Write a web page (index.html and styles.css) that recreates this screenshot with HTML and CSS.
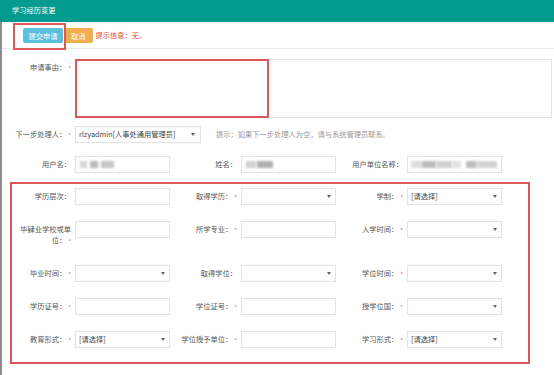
FILE: index.html
```html
<!DOCTYPE html>
<html lang="zh-CN">
<head>
<meta charset="utf-8">
<title>学习经历变更</title>
<link rel="stylesheet" href="styles.css">
</head>
<body>
<header class="titlebar">学习经历变更</header>
<main class="content">
  <div class="toolbar">
    <button class="btn btn-submit" type="button">提交申请</button>
    <button class="btn btn-cancel" type="button">取消</button>
    <span class="msg">提示信息：无。</span>
    <span class="mark mark-submit"></span>
  </div>

  <form class="form">
    <div class="line line-reason">
      <label class="lbl">申请事由：<span class="req">*</span></label>
      <div class="area-wrap">
        <textarea class="area"></textarea>
        <span class="mark mark-reason"></span>
      </div>
    </div>

    <div class="line line-next">
      <label class="lbl">下一步处理人：<span class="req">*</span></label>
      <div class="sel sel-wide"><select><option>rlzyadmin[人事处通用管理员]</option></select></div>
      <span class="hint">提示：如果下一步处理人为空，请与系统管理员联系。</span>
    </div>

    <div class="grid grid-user">
      <label class="lbl">用户名：</label>
      <div class="inp val"><span class="blur b1"></span><span class="blur b2"></span><span class="blur b3"></span></div>
      <label class="lbl">姓名：</label>
      <div class="inp val"><span class="blur b4"></span><span class="blur b5"></span></div>
      <label class="lbl">用户单位名称：</label>
      <div class="inp val"><span class="blur b6"></span><span class="blur b7"></span><span class="blur b8"></span><span class="blur b9"></span><span class="gap"></span><span class="blur b10"></span><span class="blur b11"></span></div>
    </div>

    <div class="grid grid-edu">
      <label class="lbl first">学历层次：</label>
      <input class="inp" type="text">
      <label class="lbl">取得学历：<span class="req">*</span></label>
      <div class="sel"><select><option></option></select></div>
      <label class="lbl">学制：<span class="req">*</span></label>
      <div class="sel"><select><option>[请选择]</option></select></div>

      <label class="lbl first">毕肄业学校或单位：<span class="req">*</span></label>
      <input class="inp" type="text">
      <label class="lbl">所学专业：<span class="req">*</span></label>
      <input class="inp" type="text">
      <label class="lbl">入学时间：<span class="req">*</span></label>
      <div class="sel"><select><option></option></select></div>

      <label class="lbl first">毕业时间：<span class="req">*</span></label>
      <div class="sel"><select><option></option></select></div>
      <label class="lbl">取得学位：</label>
      <div class="sel"><select><option></option></select></div>
      <label class="lbl">学位时间：<span class="req">*</span></label>
      <div class="sel"><select><option></option></select></div>

      <label class="lbl first">学历证号：<span class="req">*</span></label>
      <input class="inp" type="text">
      <label class="lbl">学位证号：<span class="req">*</span></label>
      <input class="inp" type="text">
      <label class="lbl">授学位国：<span class="req">*</span></label>
      <div class="sel"><select><option></option></select></div>

      <label class="lbl first">教育形式：<span class="req">*</span></label>
      <div class="sel"><select><option>[请选择]</option></select></div>
      <label class="lbl">学位授予单位：<span class="req">*</span></label>
      <input class="inp" type="text">
      <label class="lbl">学习形式：<span class="req">*</span></label>
      <div class="sel"><select><option>[请选择]</option></select></div>

      <span class="mark mark-edu"></span>
    </div>
  </form>
</main>
</body>
</html>
```
FILE: styles.css
```css
* { box-sizing: border-box; }

html, body { margin: 0; padding: 0; background: #fff; }

body {
  font-family: "Noto Sans CJK SC", "Noto Sans", sans-serif;
  font-size: 7.25px;
  color: #555;
  width: 554px;
  height: 375px;
  overflow: hidden;
}

.titlebar {
  height: 22px;
  line-height: 21px;
  padding-left: 12px;
  background: #029b90;
  color: #fff;
}

.content {
  position: relative;
  border-left: 2px solid #8d8d8d;
  height: 353px;
}

.toolbar {
  position: relative;
  height: 27px;
  border-bottom: 1px solid #ebebeb;
  display: flex;
  align-items: flex-start;
  gap: 1px;
  padding: 6px 0 0 21px;
}

.btn {
  height: 15px;
  line-height: 15px;
  padding: 0 5.5px;
  border: none;
  border-radius: 2px;
  color: #fff;
  font: inherit;
  cursor: pointer;
}
.btn-submit { background: #5bc0de; }
.btn-cancel { background: #f0ad4e; padding: 0 7px; }

.msg {
  margin-left: 2px;
  line-height: 15px;
  color: #ea4a2e;
}

.mark {
  position: absolute;
  border: 2px solid #e0575a;
  pointer-events: none;
}
.mark-submit { left: 11px; top: 1px; width: 53px; height: 27px; }
.mark-reason { left: 0; top: 0; width: 194px; height: 59px; }
.mark-edu { left: 8px; top: -6px; width: 520px; height: 182px; }

.form { padding-top: 10px; }

.line { display: flex; align-items: flex-start; }

.lbl {
  text-align: right;
  line-height: 11px;
  padding: 3px 4px 2px 9px;
  color: #555;
}
.line .lbl { width: 73px; }
.grid .first { padding-left: 16px; }

.req {
  color: #f0704e;
  font-size: 6px;
  margin-left: 2px;
  vertical-align: -1px;
}

.area-wrap { position: relative; }
.area {
  display: block;
  width: 477px;
  height: 59px;
  border: 1px solid #e4e4e4;
  resize: none;
  font: inherit;
  padding: 0;
  margin: 0;
}

.line-next { margin-top: 8px; }

.hint {
  margin-left: 15px;
  line-height: 11px;
  padding-top: 3px;
  color: #999;
}

.grid {
  display: grid;
  grid-template-columns: 73px 95px 71px 95px 71px 95px;
  align-items: start;
}
.grid-user { margin-top: 13px; }
.grid-edu {
  position: relative;
  margin-top: 15px;
  row-gap: 16px;
}

.inp, .sel select {
  width: 95px;
  height: 17px;
  border: 1px solid #e3e3e3;
  border-radius: 0;
  background: #fff;
  font: inherit;
  color: #444;
  margin: 0;
  outline: none;
}
.inp { padding: 0 4px; }

.val {
  display: flex;
  align-items: center;
  padding-left: 4px;
}

.sel { position: relative; width: 95px; height: 17px; }
.sel select {
  display: block;
  appearance: none;
  -webkit-appearance: none;
  padding: 0 12px 0 3px;
  line-height: 15px;
}
.sel::after {
  content: "";
  position: absolute;
  right: 5px;
  top: 7px;
  border-left: 2.5px solid transparent;
  border-right: 2.5px solid transparent;
  border-top: 3px solid #666;
}
.sel-wide { width: 126px; }
.sel-wide select { width: 126px; }
.sel-wide::after { right: 6px; }

.blur {
  display: inline-block;
  height: 7px;
  filter: blur(0.9px);
}
.b1 { width: 7px; background: #d6d6d6; }
.b2 { width: 8px; margin-left: 3px; background: #b8b8b8; }
.b3 { width: 13px; margin-left: 3px; background: #c6c6c6; }
.b4 { width: 10px; background: #d2d2d2; }
.b5 { width: 16px; margin-left: 1px; background: #b0b0b0; }
.b6 { width: 11px; margin-left: -1px; background: #dedede; }
.b7 { width: 15px; background: #bcbcbc; }
.b8 { width: 16px; background: #cfcfcf; }
.b9 { width: 10px; background: #e2e2e2; }
.gap { width: 5px; }
.b10 { width: 11px; background: #bdbdbd; }
.b11 { width: 21px; background: #d3d3d3; }
```
